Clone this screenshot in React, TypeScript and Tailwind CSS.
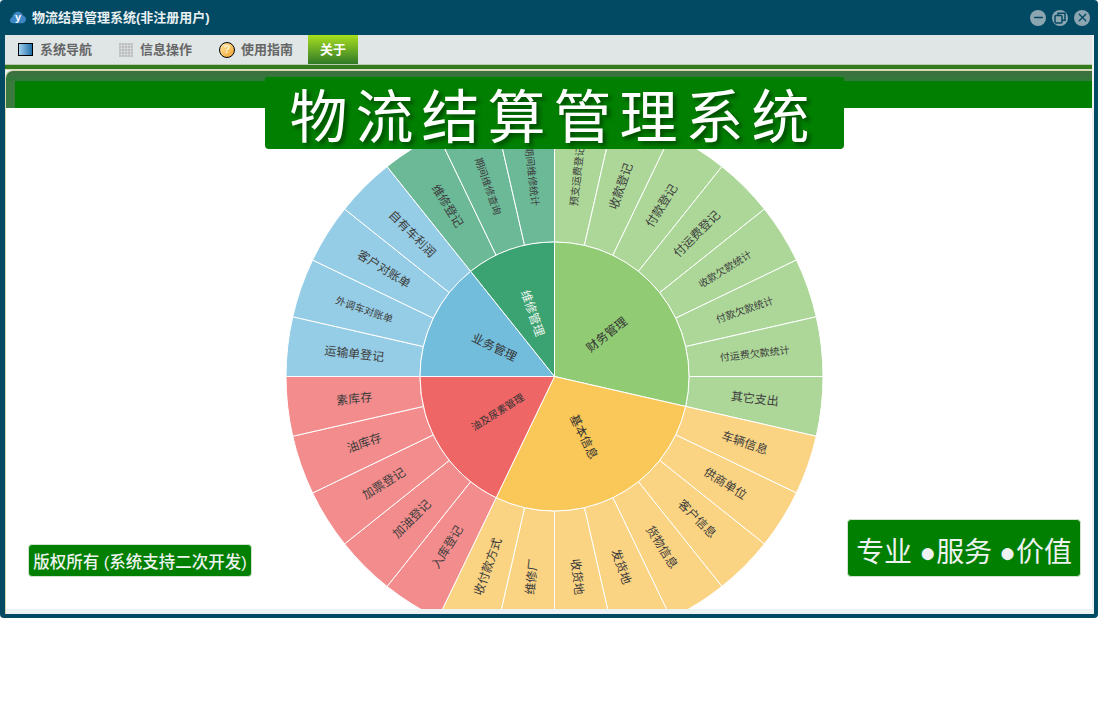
import { Minus, X } from "lucide-react";

const CX = 268.5;
const CY = 268.5;
const R1 = 134.5;
const R2 = 268.5;
const STEP = 360 / 28;

type Group = {
  name: string;
  inner: string;
  outer: string;
  nameColor?: string;
  nameSize?: number;
  items: { label: string; size?: number }[];
};

// clockwise from twelve o'clock, one slot per leaf
const groups: Group[] = [
  {
    name: "财务管理",
    inner: "#91cc75",
    outer: "#acd798",
    items: [
      { label: "预支运费登记", size: 10 },
      { label: "收款登记" },
      { label: "付款登记" },
      { label: "付运费登记" },
      { label: "收款欠款统计", size: 10 },
      { label: "付款欠款统计", size: 10 },
      { label: "付运费欠款统计", size: 10 },
      { label: "其它支出" },
    ],
  },
  {
    name: "基本信息",
    inner: "#fac858",
    outer: "#fbd483",
    items: [
      { label: "车辆信息" },
      { label: "供商单位" },
      { label: "客户信息" },
      { label: "货物信息" },
      { label: "发货地" },
      { label: "收货地" },
      { label: "维修厂" },
      { label: "收付款方式" },
    ],
  },
  {
    name: "油及尿素管理",
    inner: "#ee6666",
    outer: "#f38c8c",
    nameSize: 10,
    items: [
      { label: "入库登记" },
      { label: "加油登记" },
      { label: "加票登记" },
      { label: "油库存" },
      { label: "素库存" },
    ],
  },
  {
    name: "业务管理",
    inner: "#73bddc",
    outer: "#96cde6",
    items: [
      { label: "运输单登记" },
      { label: "外调车对账单", size: 10 },
      { label: "客户对账单" },
      { label: "自有车利润" },
    ],
  },
  {
    name: "维修管理",
    inner: "#3ba272",
    outer: "#6cb998",
    nameColor: "#eef6ee",
    items: [
      { label: "维修登记" },
      { label: "期间维修查询", size: 10 },
      { label: "期间维修统计", size: 10 },
    ],
  },
];

function polar(r: number, deg: number) {
  const a = (deg * Math.PI) / 180;
  return [CX + r * Math.sin(a), CY - r * Math.cos(a)];
}

function sector(r0: number, r: number, from: number, to: number) {
  const [x1, y1] = polar(r, from);
  const [x2, y2] = polar(r, to);
  const [x3, y3] = polar(r0, to);
  const [x4, y4] = polar(r0, from);
  const large = to - from > 180 ? 1 : 0;
  if (r0 === 0) {
    return `M${CX} ${CY}L${x1} ${y1}A${r} ${r} 0 ${large} 1 ${x2} ${y2}Z`;
  }
  return `M${x4} ${y4}L${x1} ${y1}A${r} ${r} 0 ${large} 1 ${x2} ${y2}L${x3} ${y3}A${r0} ${r0} 0 ${large} 0 ${x4} ${y4}Z`;
}

function RadialLabel(props: { text: string; r: number; deg: number; size: number; color: string }) {
  const [x, y] = polar(props.r, props.deg);
  const rot = props.deg <= 180 ? props.deg - 90 : props.deg - 270;
  return (
    <text
      x={x}
      y={y}
      fontSize={props.size}
      fill={props.color}
      textAnchor="middle"
      dominantBaseline="central"
      transform={`rotate(${rot} ${x} ${y})`}
    >
      {props.text}
    </text>
  );
}

function Sunburst() {
  let slot = 0;
  return (
    <svg width="537" height="537" viewBox="0 0 537 537" className="block shrink-0">
      {groups.map((g) => {
        const start = slot * STEP;
        const end = (slot + g.items.length) * STEP;
        const leaves = g.items.map((item) => {
          const from = slot * STEP;
          const to = from + STEP;
          slot += 1;
          return (
            <g key={item.label}>
              <path d={sector(R1, R2, from, to)} fill={g.outer} stroke="#fff" strokeWidth="1" />
              <RadialLabel
                text={item.label}
                r={201.5}
                deg={(from + to) / 2}
                size={item.size ?? 12}
                color="#3d3d3d"
              />
            </g>
          );
        });
        return (
          <g key={g.name}>
            {leaves}
            <path d={sector(0, R1, start, end)} fill={g.inner} stroke="#fff" strokeWidth="1" />
            <RadialLabel
              text={g.name}
              r={67}
              deg={(start + end) / 2}
              size={g.nameSize ?? 12}
              color={g.nameColor ?? "#333"}
            />
          </g>
        );
      })}
    </svg>
  );
}

function CloudLogo() {
  return (
    <span className="relative block h-[13px] w-[16px] shrink-0">
      <svg width="16" height="13" viewBox="0 0 16 13" className="block">
        <path
          d="M3.2 12.2C1.3 12.2 0 10.9 0 9.2c0-1.5 1-2.6 2.3-2.9C2.6 3.2 5 .8 8 .8c2.6 0 4.6 1.7 5.2 4 1.6.3 2.8 1.7 2.8 3.4 0 2.2-1.7 4-3.9 4Z"
          fill="#3d86c4"
        />
      </svg>
      <span className="absolute inset-0 flex items-center justify-center text-[11px] leading-none font-bold text-white">
        y
      </span>
    </span>
  );
}

function MonitorIcon() {
  return (
    <span className="block h-[13px] w-[15px] border border-black bg-gradient-to-r from-[#9fd0ee] to-[#1f6fa8]" />
  );
}

function GridIcon() {
  return (
    <svg width="14" height="14" viewBox="0 0 14 14">
      {[1, 4, 7, 10, 13].map((v) => (
        <g key={v} stroke="#b5b5b5" strokeWidth="1">
          <line x1={v} y1="0" x2={v} y2="14" />
          <line x1="0" y1={v} x2="14" y2={v} />
        </g>
      ))}
    </svg>
  );
}

function HelpIcon() {
  return (
    <span className="flex h-[16px] w-[16px] items-center justify-center rounded-full border border-black bg-gradient-to-br from-[#fde9a0] to-[#f0a020] text-[11px] leading-none font-bold text-[#fff6cf]">
      ?
    </span>
  );
}

function RestoreIcon() {
  return (
    <svg width="12" height="12" viewBox="0 0 12 12" fill="none" stroke="#024a64" strokeWidth="1.5">
      <rect x="1" y="3.5" width="7" height="7.5" rx="1" />
      <path d="M4 3V1.2h7v7H8.5" />
    </svg>
  );
}

function WinButton(props: { children: React.ReactNode }) {
  return (
    <span className="flex h-[16px] w-[16px] items-center justify-center rounded-full bg-[#8ba5b1]">
      {props.children}
    </span>
  );
}

export default function App() {
  return (
    <div className="h-[723px] w-full bg-white font-['Liberation_Sans','Noto_Sans_CJK_SC',sans-serif]">
      <div className="flex h-[618px] w-[1098px] flex-col overflow-hidden rounded-[4px] bg-[#024a64] pt-0 pr-[4px] pb-[4px] pl-[5px]">
        {/* title bar */}
        <div className="flex h-[35px] shrink-0 items-center pl-[5px] pr-[4px]">
          <CloudLogo />
          <span className="ml-[6px] text-[13px] font-bold text-[#e8f0f2]">物流结算管理系统(非注册用户)</span>
          <div className="ml-auto flex items-center gap-[6px]">
            <WinButton>
              <Minus size={13} strokeWidth={3} color="#024a64" />
            </WinButton>
            <WinButton>
              <RestoreIcon />
            </WinButton>
            <WinButton>
              <X size={13} strokeWidth={2.5} color="#024a64" />
            </WinButton>
          </div>
        </div>

        <div className="flex min-h-0 flex-1 flex-col bg-[#eef1f2] pr-[2px]">
          {/* menu */}
          <div className="flex h-[30px] shrink-0 items-stretch border-b border-[#b9c9ad] bg-[#e0e6e6] pl-[13px] text-[13px] font-bold text-[#666]">
            <div className="flex w-[101px] items-center gap-[7px]">
              <MonitorIcon />
              <span className="pt-[1px]">系统导航</span>
            </div>
            <div className="flex w-[100px] items-center gap-[7px]">
              <GridIcon />
              <span className="pt-[1px]">信息操作</span>
            </div>
            <div className="flex w-[89px] items-center gap-[6px]">
              <HelpIcon />
              <span className="pt-[1px]">使用指南</span>
            </div>
            <div className="flex w-[50px] items-center justify-center bg-gradient-to-b from-[#a7e01a] to-[#2f7a25] pt-[1px] text-white">
              关于
            </div>
          </div>
          <div className="h-[5px] shrink-0 border-b border-[#d8dcc0] bg-[#337a1f]" />

          {/* content panel */}
          <div className="relative flex min-h-0 flex-1 flex-col overflow-hidden rounded-tl-[8px] border-t border-l border-[#d4d6ae] bg-white">
            <div className="h-[10px] shrink-0 bg-gradient-to-b from-[#3d6e40] to-[#2f7a3a]" />
            <div className="h-[27px] shrink-0 border-l-[9px] border-[#3b7a3e] bg-[#007f00]" />
            <div className="min-h-0 flex-1 overflow-hidden pl-[280px]">
              <Sunburst />
            </div>
            <div className="h-[5px] shrink-0 bg-[#eef1f2]" />

            <div className="absolute top-[6px] left-[259px] flex h-[72px] w-[579px] items-center justify-center rounded-t-[2px] rounded-b-[4px] bg-[#007f00] pt-[9px] pr-[2px] text-[58px] leading-none tracking-[8px] text-white [text-shadow:3px_3px_4px_rgba(0,0,0,0.45)]">
              物流结算管理系统
            </div>
            <div className="absolute top-[473px] left-[22px] flex h-[33px] w-[224px] items-center justify-center rounded-[4px] border border-[#cfe3cf] bg-[#007f00] pt-[3px] text-[16.5px] font-medium whitespace-nowrap text-[#eef2f0]">
              版权所有 (系统支持二次开发)
            </div>
            <div className="absolute top-[448px] left-[841px] flex h-[58px] w-[234px] items-center justify-center rounded-[4px] border border-[#cfe3cf] bg-[#007f00] pt-[9px] text-[28px] tracking-[-0.2px] whitespace-nowrap text-[#eef2f0]">
              专业 ●服务 ●价值
            </div>
          </div>
        </div>
      </div>
    </div>
  );
}
